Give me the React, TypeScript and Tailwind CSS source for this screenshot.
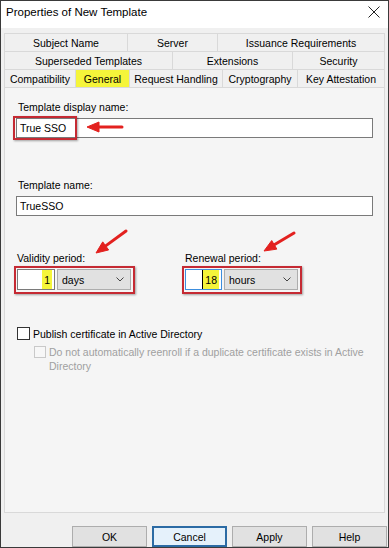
import React from "react";

const rows = [
  [
    { label: "Subject Name", w: "w-[124px]" },
    { label: "Server", w: "w-[90px]" },
    { label: "Issuance Requirements", w: "w-[167px]" },
  ],
  [
    { label: "Superseded Templates", w: "w-[169px]" },
    { label: "Extensions", w: "w-[120px]" },
    { label: "Security", w: "w-[92px]" },
  ],
  [
    { label: "Compatibility", w: "w-[72px]" },
    { label: "General", w: "w-[54px]", active: true },
    { label: "Request Handling", w: "w-[93px]" },
    { label: "Cryptography", w: "w-[75px]" },
    { label: "Key Attestation", w: "w-[87px]" },
  ],
];

function Arrow({ x1, y1, x2, y2 }: { x1: number; y1: number; x2: number; y2: number }) {
  // tail (x1,y1) -> tip (x2,y2)
  const dx = x2 - x1;
  const dy = y2 - y1;
  const len = Math.hypot(dx, dy);
  const ux = dx / len;
  const uy = dy / len;
  const bx = x2 - ux * 12;
  const by = y2 - uy * 12;
  const nx = -uy;
  const ny = ux;
  return (
    <g fill="#e3211f" stroke="#e3211f">
      <line x1={x1} y1={y1} x2={bx} y2={by} strokeWidth={3} strokeLinecap="round" />
      <polygon
        points={`${x2},${y2} ${bx + nx * 5},${by + ny * 5} ${bx - nx * 5},${by - ny * 5}`}
        strokeWidth={1}
      />
    </g>
  );
}

function Combo({ value }: { value: string }) {
  return (
    <div className="flex h-[21px] w-[74px] items-center justify-between border border-[#adadad] bg-[#e1e1e1] pl-[4px] pr-[6px]">
      <span>{value}</span>
      <svg width="8" height="5" viewBox="0 0 8 5">
        <path d="M0.5 0.5 L4 4 L7.5 0.5" fill="none" stroke="#444" strokeWidth="1" />
      </svg>
    </div>
  );
}

function RedBox() {
  return (
    <div className="pointer-events-none absolute -top-[3px] -bottom-[4px] -left-[3px] -right-[4px] border-2 border-[#c52a33] shadow-[1px_1px_2px_rgba(0,0,0,0.35)]" />
  );
}

export default function App() {
  return (
    <div className="relative h-[548px] w-[389px] overflow-hidden border border-[#3a3a3a] bg-[#f0f0f0] font-['Liberation_Sans',Arial,sans-serif] text-[10.5px] leading-[14px] text-black">
      <div className="flex h-[27px] items-start justify-between bg-white pl-[5px] pr-[8px] pt-[4px] text-[11.5px]">
        <span>Properties of New Template</span>
        <svg width="12" height="12" viewBox="0 0 12 12" className="mt-[1px]">
          <path d="M0.5 0.5 L11.5 11.5 M11.5 0.5 L0.5 11.5" stroke="#222" strokeWidth="1" />
        </svg>
      </div>

      <div className="mx-[3px] mt-[5px]">
        {rows.map((row, i) => (
          <div key={i} className="flex h-[18px]">
            {row.map((t) => (
              <div
                key={t.label}
                className={`${t.w} flex items-center justify-center border-t border-r border-[#d9d9d9] first:border-l ${
                  "active" in t && t.active ? "bg-[#f5f53a]" : "bg-[#f0f0f0]"
                }`}
              >
                {t.label}
              </div>
            ))}
          </div>
        ))}
      </div>

      <div className="mx-[3px] h-[426px] border border-[#d9d9d9] bg-[#f5f5f5] pl-[11px] pt-[12px]">
        <div className="ml-[2px]">Template display name:</div>
        <div className="relative mt-[4px] flex h-[20px] w-[357px] items-center border border-[#7a7a7a] bg-white pl-[3px]">
          True SSO
          <div className="pointer-events-none absolute -top-[3px] -left-[4px] h-[24px] w-[64px] border-2 border-[#c52a33] shadow-[1px_1px_2px_rgba(0,0,0,0.35)]" />
        </div>

        <div className="ml-[2px] mt-[40px]">Template name:</div>
        <div className="mt-[4px] flex h-[20px] w-[357px] items-center border border-[#7a7a7a] bg-white pl-[3px]">
          TrueSSO
        </div>

        <div className="ml-[1px] mt-[35px] flex">
          <div className="w-[168px]">
            <div>Validity period:</div>
            <div className="relative mt-[4px] flex w-[114px] gap-[2px]">
              <div className="flex h-[21px] w-[38px] items-center justify-end border border-[#7a7a7a] bg-white pr-[2px]">
                <span className="flex h-[19px] items-center bg-[#f5f53a] px-[2px]">1</span>
              </div>
              <Combo value="days" />
              <RedBox />
            </div>
          </div>
          <div>
            <div>Renewal period:</div>
            <div className="relative mt-[4px] flex w-[113px] gap-[2px]">
              <div className="flex h-[21px] w-[37px] items-center justify-end border border-[#3d8ede] bg-white pr-[2px]">
                <span className="flex h-[19px] items-center border-l border-black bg-[#f5f53a] px-[2px]">18</span>
              </div>
              <Combo value="hours" />
              <RedBox />
            </div>
          </div>
        </div>

        <div className="ml-[1px] mt-[37px] flex h-[13px] items-center gap-[3px]">
          <div className="h-[13px] w-[13px] border border-[#333] bg-white" />
          <span>Publish certificate in Active Directory</span>
        </div>
        <div className="ml-[18px] mt-[5px] flex items-start gap-[3px] text-[#a0a0a0]">
          <div className="mt-[1px] h-[12px] w-[12px] shrink-0 border border-[#c9c9c9] bg-[#f7f7f7]" />
          <span className="w-[325px]">
            Do not automatically reenroll if a duplicate certificate exists in Active Directory
          </span>
        </div>
      </div>

      <div className="mt-[13px] flex justify-end gap-[5px] pr-[1px]">
        <button className="h-[21px] w-[75px] border border-[#adadad] bg-[#e1e1e1]">OK</button>
        <button className="h-[21px] w-[75px] border-2 border-[#2c6ba4] bg-[#e5f1fb]">Cancel</button>
        <button className="h-[21px] w-[75px] border border-[#adadad] bg-[#e1e1e1]">Apply</button>
        <button className="h-[21px] w-[75px] border border-[#adadad] bg-[#e1e1e1]">Help</button>
      </div>

      <svg
        className="pointer-events-none absolute left-0 top-0"
        width="389"
        height="548"
        viewBox="0 0 389 548"
      >
        <Arrow x1={121} y1={126} x2={86} y2={126} />
        <Arrow x1={125} y1={230} x2={95} y2={252} />
        <Arrow x1={293} y1={232} x2={263} y2={250} />
      </svg>
    </div>
  );
}
